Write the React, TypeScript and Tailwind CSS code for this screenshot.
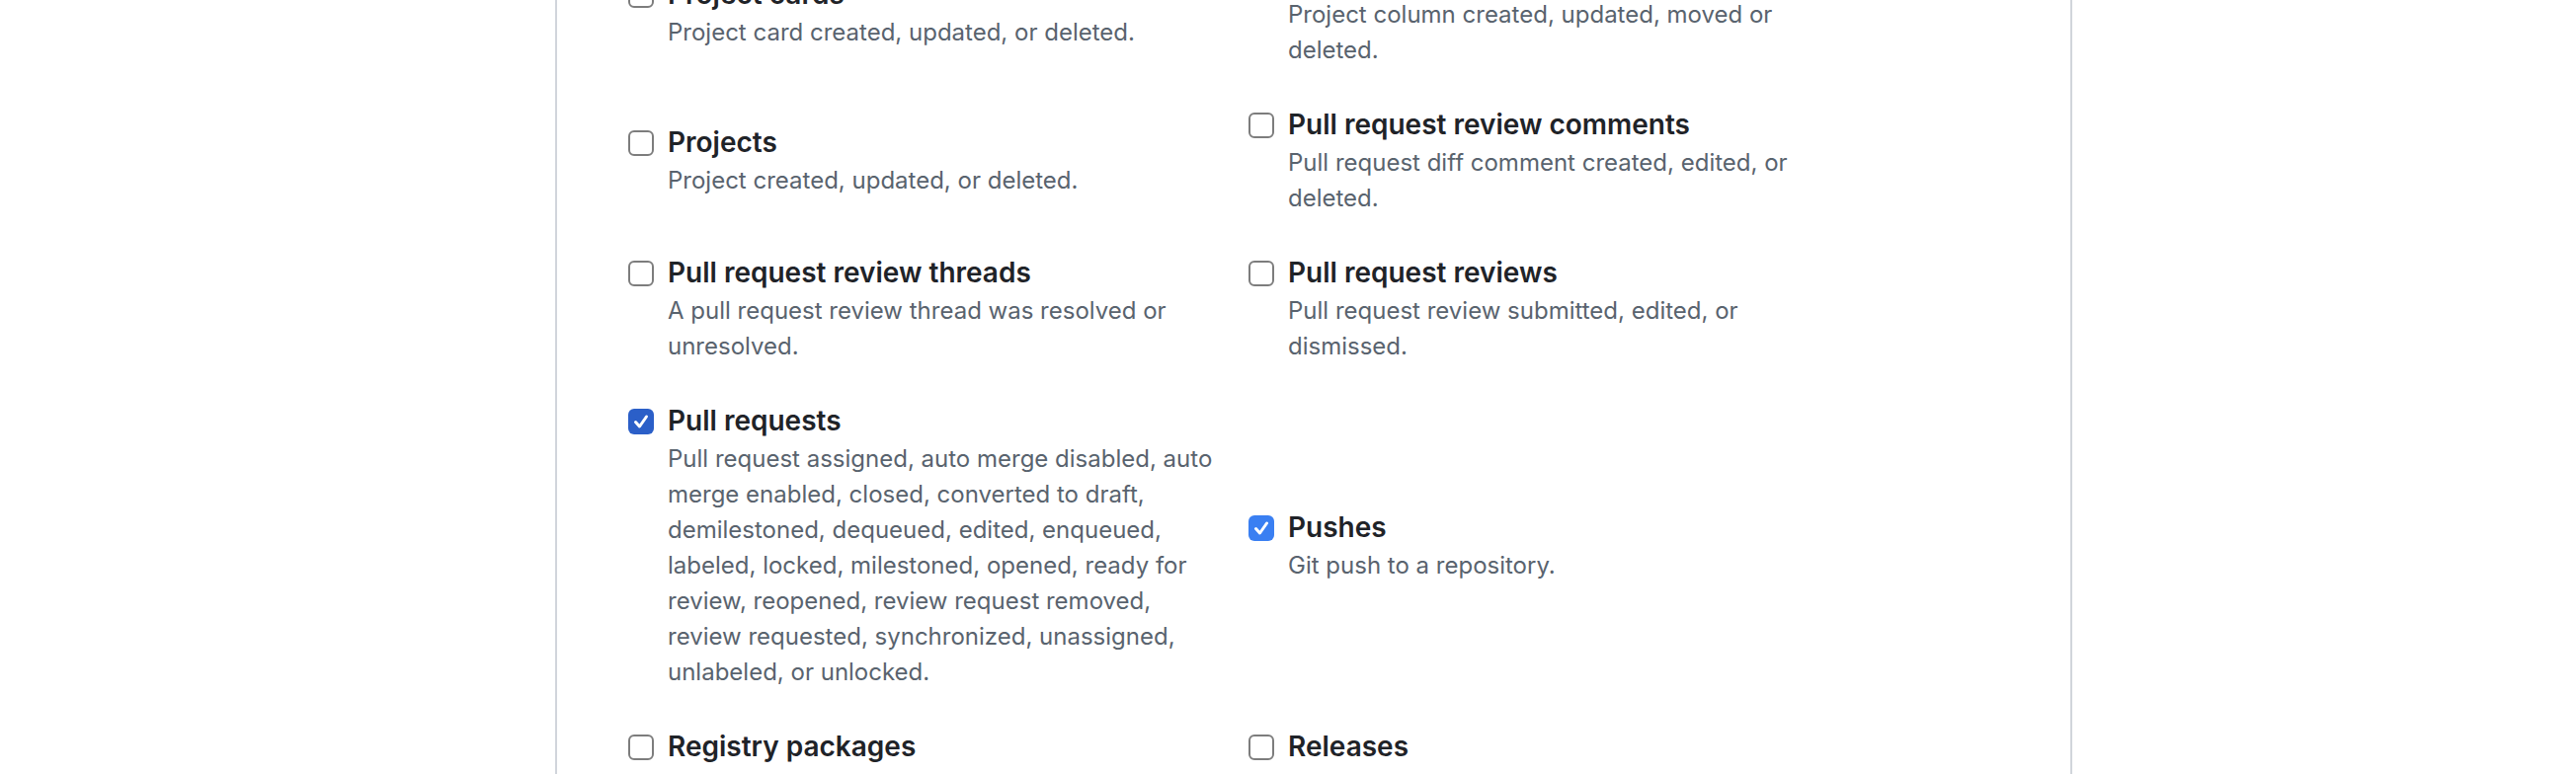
const events = [
  {
    left: { title: 'Project cards', description: 'Project card created, updated, or deleted.', checked: false },
    right: { title: 'Project columns', description: 'Project column created, updated, moved or deleted.', checked: false },
  },
  {
    left: { title: 'Projects', description: 'Project created, updated, or deleted.', checked: false },
    right: { title: 'Pull request review comments', description: 'Pull request diff comment created, edited, or deleted.', checked: false },
  },
  {
    left: { title: 'Pull request review threads', description: 'A pull request review thread was resolved or unresolved.', checked: false },
    right: { title: 'Pull request reviews', description: 'Pull request review submitted, edited, or dismissed.', checked: false },
  },
  {
    left: {
      title: 'Pull requests',
      description:
        'Pull request assigned, auto merge disabled, auto merge enabled, closed, converted to draft, demilestoned, dequeued, edited, enqueued, labeled, locked, milestoned, opened, ready for review, reopened, review request removed, review requested, synchronized, unassigned, unlabeled, or unlocked.',
      checked: true,
      tone: 'dark',
    },
    right: { title: 'Pushes', description: 'Git push to a repository.', checked: true },
  },
  {
    left: { title: 'Registry packages', description: 'Registry package published or updated in a repository.', checked: false },
    right: { title: 'Releases', description: 'Release created, edited, published, unpublished, or deleted.', checked: false },
  },
];

interface HookEvent {
  title: string;
  description: string;
  checked: boolean;
  tone?: string;
}

function Checkbox({ checked, tone }: { checked: boolean; tone?: string }) {
  if (!checked) {
    return (
      <span className="mt-[9px] h-[26px] w-[26px] shrink-0 rounded-[6px] border-2 border-[#7d7d7d] bg-white" />
    );
  }
  return (
    <span
      className={`mt-[9px] flex h-[26px] w-[26px] shrink-0 items-center justify-center rounded-[6px] ${
        tone === 'dark' ? 'bg-[#2b5fc8]' : 'bg-[#3a7ff2]'
      }`}
    >
      <svg width="20" height="20" viewBox="0 0 20 20" fill="none">
        <path d="M4.5 10.5 L8.5 15 L15.5 5" stroke="white" strokeWidth="3" strokeLinecap="round" strokeLinejoin="round" />
      </svg>
    </span>
  );
}

function EventOption({ title, description, checked, tone }: HookEvent) {
  return (
    <label className="flex gap-[14px]">
      <Checkbox checked={checked} tone={tone} />
      <div className="max-w-[555px]">
        <p className="text-[28px] font-semibold leading-[42px] text-[#1f2328]">{title}</p>
        <p className="text-[24px] leading-[36px] text-[#59636e]">{description}</p>
      </div>
    </label>
  );
}

export default function App() {
  return (
    <div className="h-[784px] overflow-hidden bg-white pl-[562px] font-['Inter',sans-serif]">
      <div className="flow-root h-full w-[1536px] border-x-2 border-[#d1d5db] pl-[72px]">
        <div className="-mt-[45px] grid grid-cols-[628px_628px] items-center gap-y-[36px]">
          {events.map((row) => (
            <>
              <EventOption key={row.left.title} {...row.left} />
              <EventOption key={row.right.title} {...row.right} />
            </>
          ))}
        </div>
      </div>
    </div>
  );
}
